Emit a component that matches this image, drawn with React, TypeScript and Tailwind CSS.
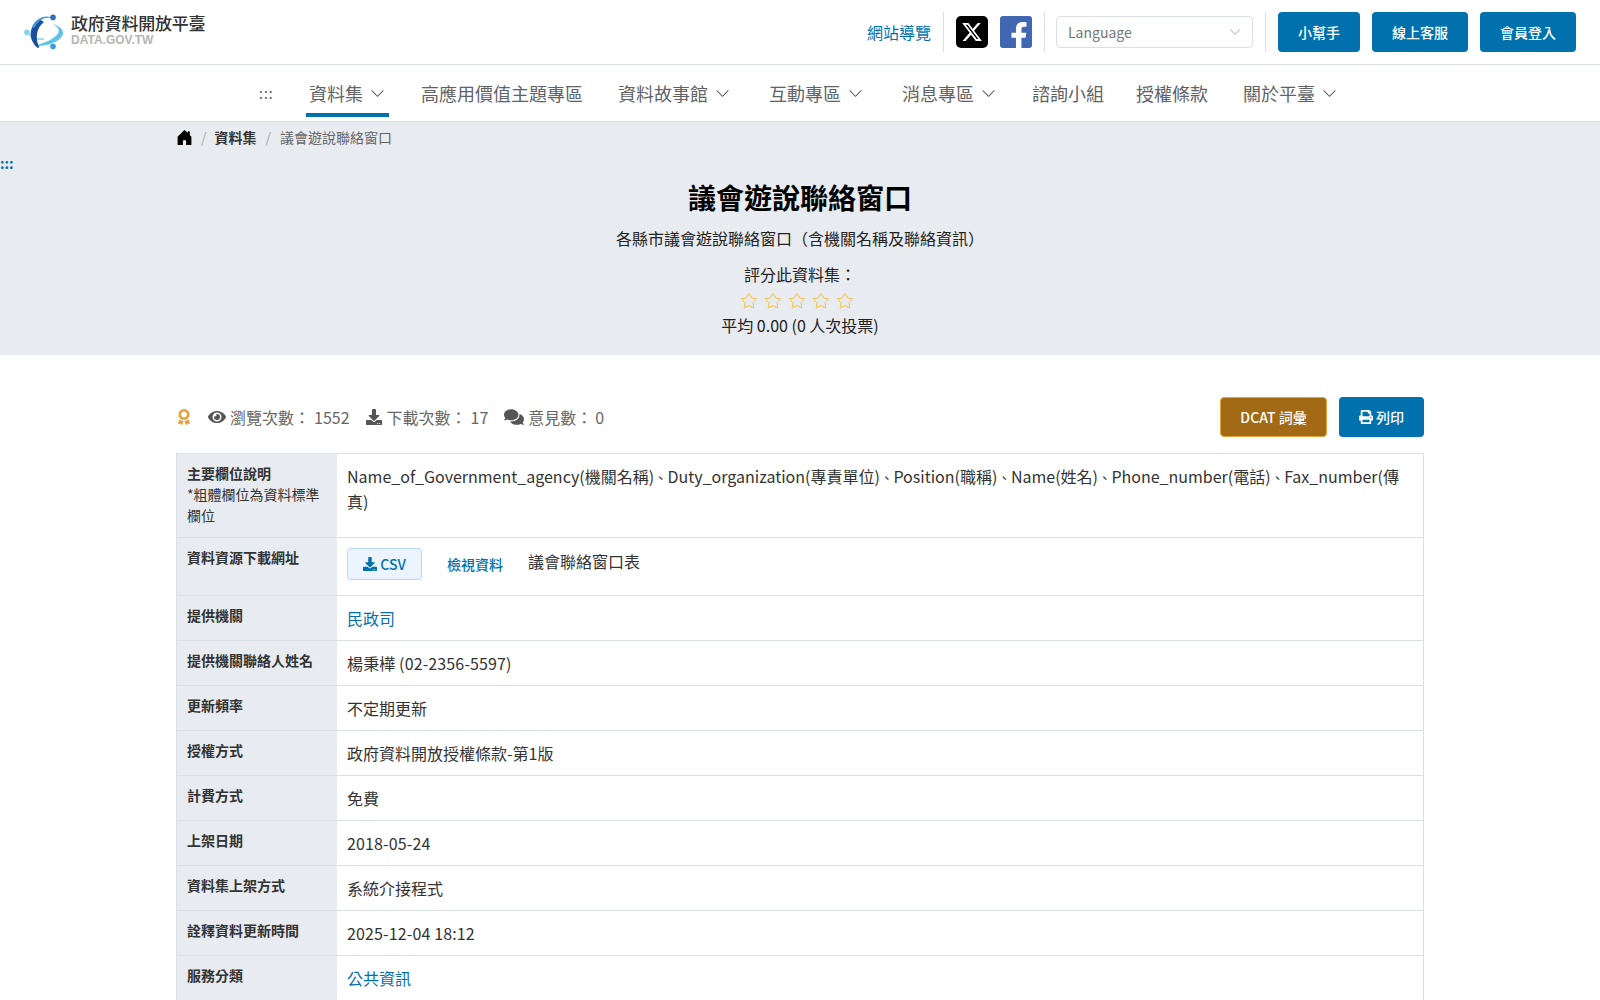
import React from 'react';
import { FaEye, FaDownload, FaComments, FaPrint, FaAward, FaFacebookF } from 'react-icons/fa';
import { FaXTwitter } from 'react-icons/fa6';
import { BsChevronDown, BsHouseDoorFill } from 'react-icons/bs';
import { Star } from 'lucide-react';

const Logo = () => (
  <svg width="41" height="36" viewBox="0 0 41 36" className="shrink-0">
    {/* ring */}
    <path d="M11 31.5C25 33 39 26 39 19C39 15 35 12 29 10C34 13 36 16 34 19.5C30 25 21 29 11 31.5z" fill="#5cc4ea" />
    <path d="M5 20C8 24 13 25.5 20 25" fill="none" stroke="#8fd8f0" strokeWidth="1.6" />
    {/* crescent */}
    <path d="M15 5C6 11 3 24 13 33.5c1 .4 2.4.2 2.4-.3C11 25 12 14 20 8z" fill="#1d4f9f" />
    <path d="M8 13C12 4 22-1 30 5 23 2 15 5 11 13c-1 1-3 1-3 0z" fill="#3b9bdc" />
    <circle cx="29" cy="3.4" r="2.8" fill="#2f6fbd" />
    <circle cx="2.9" cy="18.3" r="2.8" fill="#86d3ef" />
    <circle cx="29" cy="32.4" r="2.8" fill="#3f9fdc" />
  </svg>
);

const NavItem = ({ label, chevron, active, className }: { label: string; chevron?: boolean; active?: boolean; className: string }) => (
  <div className={`flex items-center h-[52px] whitespace-nowrap text-[18px] text-[#5f6368] ${active ? 'border-b-4 border-[#0071ad] px-[3px] pt-[8px]' : 'pt-[4px]'} ${className}`}>
    <span>{label}</span>
    {chevron && <BsChevronDown size={15} className="ml-[7px] text-[#555]" />}
  </div>
);

const fields = ['Name_of_Government_agency(機關名稱)', 'Duty_organization(專責單位)', 'Position(職稱)', 'Name(姓名)', 'Phone_number(電話)', 'Fax_number(傳'];

const rows: { label: string; value: string; link?: boolean; digits?: boolean }[] = [
  { label: '提供機關', value: '民政司', link: true },
  { label: '提供機關聯絡人姓名', value: '楊秉樺 (02-2356-5597)', digits: true },
  { label: '更新頻率', value: '不定期更新' },
  { label: '授權方式', value: '政府資料開放授權條款-第1版' },
  { label: '計費方式', value: '免費' },
  { label: '上架日期', value: '2018-05-24', digits: true },
  { label: '資料集上架方式', value: '系統介接程式' },
  { label: '詮釋資料更新時間', value: '2025-12-04 18:12', digits: true },
  { label: '服務分類', value: '公共資訊', link: true },
];

const Row = ({ label, children, height }: { label: React.ReactNode; children: React.ReactNode; height: string }) => (
  <div className={`flex border-b border-[#dcdfe6] ${height}`}>
    <div className="w-[160px] shrink-0 bg-[#e8ebf0] px-[10px] pt-[9px] text-[14px] leading-[21px] text-[#333]">{label}</div>
    <div className="flex-1 px-[10px] pt-[10px] text-[16px] leading-[24px] text-[#333]">{children}</div>
  </div>
);

export default function App() {
  return (
    <div className="h-screen overflow-hidden bg-white font-['Noto_Sans_CJK_TC','Noto_Sans',sans-serif]">
      {/* Header */}
      <header className="flex items-center h-[65px] border-b border-[#dcdfe6] pl-[24px] pr-[24px]">
        <Logo />
        <div className="ml-[6px] mt-[-5px]">
          <div className="text-[17px] leading-[20px] text-[#333] font-medium tracking-[-0.2px]">政府資料開放平臺</div>
          <div className="text-[12px] leading-[12px] mt-[1px] text-[#b5b5b5] font-bold font-['Liberation_Sans',sans-serif]">DATA.GOV.TW</div>
        </div>
        <div className="ml-auto flex items-center h-[40px]">
          <a className="text-[16px] text-[#0071ad] pr-[12px] border-r border-[#dcdfe6] h-full flex items-center">網站導覽</a>
          <div className="ml-[12px] w-[32px] h-[32px] rounded-[5px] bg-black flex items-center justify-center">
            <FaXTwitter size={22} className="text-white" />
          </div>
          <div className="ml-[12px] w-[32px] h-[32px] rounded-[3px] bg-[#4267b2] overflow-hidden flex items-end justify-end">
            <FaFacebookF size={28} className="text-white mb-[-2px] mr-[-1px]" />
          </div>
          <div className="ml-[12px] mr-[11px] h-full border-l border-[#dcdfe6]" />
          <div className="flex items-center justify-between w-[197px] h-[32px] border border-[#dcdfe6] rounded-[4px] pl-[11px] pr-[11px] text-[14px] text-[#73767a]">
            <span>Language</span>
            <BsChevronDown size={12} className="text-[#aaa]" />
          </div>
          <div className="ml-[12px] mr-[12px] h-full border-l border-[#dcdfe6]" />
          <button className="w-[82px] h-[40px] rounded-[4px] bg-[#0071ad] text-white text-[14px] font-medium">小幫手</button>
          <button className="ml-[12px] w-[96px] h-[40px] rounded-[4px] bg-[#0071ad] text-white text-[14px] font-medium">線上客服</button>
          <button className="ml-[12px] w-[96px] h-[40px] rounded-[4px] bg-[#0071ad] text-white text-[14px] font-medium">會員登入</button>
        </div>
      </header>

      {/* Nav */}
      <nav className="flex items-start h-[57px] pl-[259px] border-b border-[#dcdfe6]">
        <div className="h-[52px] pt-[4px] w-[47px] flex items-center text-[14px] text-[#555] tracking-[1px]">:::</div>
        <NavItem label="資料集" chevron active className="w-[83px]" />
        <NavItem label="高應用價值主題專區" className="ml-[32px]" />
        <NavItem label="資料故事館" chevron className="ml-[35px]" />
        <NavItem label="互動專區" chevron className="ml-[39px]" />
        <NavItem label="消息專區" chevron className="ml-[39px]" />
        <NavItem label="諮詢小組" className="ml-[36px]" />
        <NavItem label="授權條款" className="ml-[32px]" />
        <NavItem label="關於平臺" chevron className="ml-[35px]" />
      </nav>

      {/* Hero */}
      <section className="h-[233px] bg-[#e8ebf0]">
        <div className="flex items-center h-[30px] pl-[176px] text-[14px]">
          <BsHouseDoorFill size={17} className="text-black" />
          <span className="mx-[8px] text-[#aaa]">/</span>
          <span className="font-bold text-[#333]">資料集</span>
          <span className="mx-[9px] text-[#aaa]">/</span>
          <span className="text-[#666]">議會遊說聯絡窗口</span>
        </div>
        <div className="mt-[4px] h-[14px] text-[14px] leading-[14px] text-[#0071ad] font-bold">:::</div>
        <h1 className="mt-[9px] text-center text-[28px] leading-[36px] font-bold text-black">議會遊說聯絡窗口</h1>
        <p className="mt-[11px] text-center text-[16px] leading-[24px] text-[#222]">各縣市議會遊說聯絡窗口（含機關名稱及聯絡資訊）</p>
        <p className="mt-[12px] text-center text-[16px] leading-[24px] text-[#222]">評分此資料集：</p>
        <div className="flex justify-center gap-[6px] mt-[3px] h-[24px] items-center pr-[6px]">
          {[1, 2, 3, 4, 5].map((i) => (
            <Star key={i} size={18} strokeWidth={1.2} className="text-[#f7ba2a]" />
          ))}
        </div>
        <p className="text-center text-[16px] leading-[25px] text-[#222]">平均 0.00 (0 人次投票)</p>
      </section>

      <main className="w-[1248px] mx-auto">
        {/* Stats */}
        <div className="flex items-center h-[40px] mt-[42px] text-[16px] text-[#666]">
          <FaAward size={16} className="text-[#e9a23b]" />
          <FaEye size={18} className="ml-[16px] text-[#555]" />
          <span className="ml-[4px]">瀏覽次數：</span>
          <span className="ml-[4px]">1552</span>
          <FaDownload size={16} className="ml-[16px] text-[#555]" />
          <span className="ml-[5px]">下載次數：</span>
          <span className="ml-[4px]">17</span>
          <FaComments size={20} className="ml-[16px] text-[#555]" />
          <span className="ml-[4px]">意見數：</span>
          <span className="ml-[3px]">0</span>
          <button className="ml-auto w-[107px] h-[40px] rounded-[4px] bg-[#a26a15] border border-[#e6a23c] text-white text-[14px] font-medium">DCAT 詞彙</button>
          <button className="ml-[12px] w-[85px] h-[40px] rounded-[4px] bg-[#0071ad] text-white text-[14px] font-medium flex items-center justify-center gap-[3px]">
            <FaPrint size={14} />
            列印
          </button>
        </div>

        {/* Table */}
        <div className="mt-[16px] border border-[#dcdfe6] border-b-0">
          <Row
            height="h-[84px]"
            label={
              <>
                <div className="font-bold">主要欄位說明</div>
                <div>*粗體欄位為資料標準欄位</div>
              </>
            }
          >
            {fields.map((f, i) => (
              <React.Fragment key={f}>
                {i > 0 && <span className="text-[13.5px]">、</span>}
                {f}
              </React.Fragment>
            ))}
            <br />
            真)
          </Row>
          <Row height="h-[58px]" label={<span className="font-bold">資料資源下載網址</span>}>
            <div className="flex items-center">
              <button className="w-[75px] h-[32px] rounded-[4px] bg-[#ecf5ff] border border-[#b3d8ff] text-[#0071ad] text-[14px] font-medium flex items-center justify-center gap-[3px]">
                <FaDownload size={14} />
                CSV
              </button>
              <a className="ml-[25px] text-[14px] font-medium text-[#0071ad]">檢視資料</a>
              <span className="ml-[25px] mt-[-6px]">議會聯絡窗口表</span>
            </div>
          </Row>
          {rows.map((r) => (
            <Row key={r.label} height="h-[45px]" label={<span className="font-bold">{r.label}</span>}>
              {r.link ? <a className="text-[#0071ad]">{r.value}</a> : <span className={r.digits ? 'tracking-[0.13px]' : ''}>{r.value}</span>}
            </Row>
          ))}
        </div>
      </main>
    </div>
  );
}
